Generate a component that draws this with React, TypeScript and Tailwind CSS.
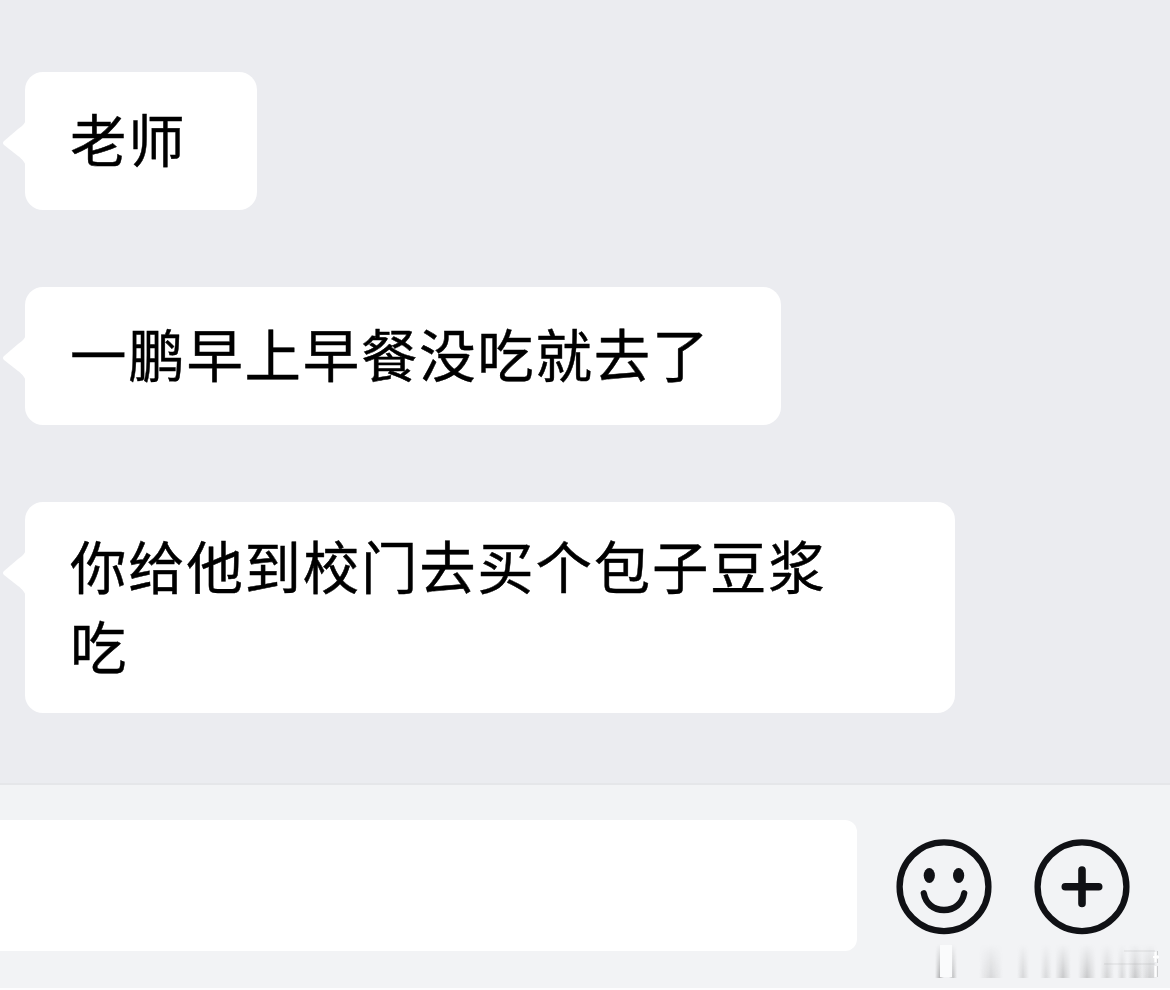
import clsx from "clsx";

interface Message {
  id: number;
  lines: string[];
  className: string;
}

const messages: Message[] = [
  { id: 1, lines: ["老师"], className: "w-[232px] h-[138px] pt-[26px]" },
  { id: 2, lines: ["一鹏早上早餐没吃就去了"], className: "w-[756px] h-[138px] pt-[26px]" },
  { id: 3, lines: ["你给他到校门去买个包子豆浆", "吃"], className: "w-[930px] h-[211px] pt-[23px]" },
];

// vertical streaks in the bottom right corner: x, width, opacity
const streaks = [
  [45, 24, 0.17],
  [83, 12, 0.18],
  [106, 12, 0.16],
  [121, 16, 0.27],
  [144, 18, 0.27],
  [166, 14, 0.2],
  [183, 10, 0.17],
  [194, 14, 0.25],
  [208, 16, 0.15],
];

function MessageBubble({ message }: { message: Message }) {
  return (
    <div
      className={clsx(
        "relative rounded-[18px] bg-white pl-[45px] text-[56.4px] leading-[80px] tracking-[1.8px] text-black [-webkit-text-stroke:0.45px_#000]",
        message.className
      )}
    >
      <svg className="absolute top-[48px] -left-[23px]" width="24" height="46" viewBox="0 0 24 46">
        <path d="M24 0C22 5 20 6 16 9L2 21Q0 23 2 25L16 36C20 39 22 41 24 46Z" fill="#fff" />
      </svg>
      {message.lines.map((line) => (
        <p key={line} className="whitespace-nowrap">
          {line}
        </p>
      ))}
    </div>
  );
}

function SmileIcon() {
  return (
    <svg width="96" height="96" viewBox="0 0 96 96" fill="none" stroke="#101115" strokeWidth="6.3" strokeLinecap="round">
      <circle cx="48" cy="47.7" r="44.4" />
      <ellipse cx="33.3" cy="36.5" rx="5.6" ry="7.5" fill="#101115" stroke="none" />
      <ellipse cx="62.6" cy="36.5" rx="5.6" ry="7.5" fill="#101115" stroke="none" />
      <path d="M27.8 54.3C29.6 64.5 37.5 71 48 71S66.4 64.5 68.2 54.3" />
    </svg>
  );
}

function PlusIcon() {
  return (
    <svg width="96" height="96" viewBox="0 0 96 96" fill="none" stroke="#101115" strokeWidth="6.3" strokeLinecap="round">
      <circle cx="48" cy="47.7" r="44.4" />
      <path d="M48 31V64.5M31.3 47.7H64.7" strokeWidth="7.6" />
    </svg>
  );
}

function CornerStreaks() {
  return (
    <svg className="absolute right-0 bottom-[10px]" width="236" height="34" viewBox="0 0 236 34">
      <defs>
        <linearGradient id="fall" x1="0" y1="0" x2="0" y2="1">
          <stop offset="0" stopColor="#fff" stopOpacity="0" />
          <stop offset="1" stopColor="#fff" />
        </linearGradient>
        <linearGradient id="side" x1="0" y1="0" x2="1" y2="0">
          <stop offset="0" stopColor="#555" stopOpacity="0" />
          <stop offset="0.5" stopColor="#555" />
          <stop offset="1" stopColor="#555" stopOpacity="0" />
        </linearGradient>
        <linearGradient id="edge" x1="0" y1="0" x2="1" y2="0">
          <stop offset="0" stopColor="#555" stopOpacity="0" />
          <stop offset="1" stopColor="#555" />
        </linearGradient>
        <mask id="fade">
          <rect width="236" height="34" fill="url(#fall)" />
        </mask>
      </defs>
      <g mask="url(#fade)">
        <rect x="1" width="9" height="34" fill="url(#side)" opacity="0.4" />
        <rect x="15" width="8" height="34" fill="url(#side)" opacity="0.3" />
        {streaks.map(([x, width, opacity]) => (
          <rect key={x} x={x} width={width} height="34" fill="url(#side)" opacity={opacity} />
        ))}
        <rect x="194" width="26" height="34" fill="url(#edge)" opacity="0.1" />
      </g>
      <rect x="6" y="1" width="12" height="32" fill="#fafbfc" />
      <path d="M190 7H221M170 20H221" stroke="#999" strokeOpacity="0.13" strokeWidth="2" />
      <path d="M221.5 8V18M219 13H225M221.5 22V33" stroke="#fff" strokeWidth="2" />
      <path d="M223.5 7V11M223.5 15V19M223.5 22V33" stroke="#777" strokeOpacity="0.3" />
    </svg>
  );
}

export default function App() {
  return (
    <div className="flex h-[990px] w-[1170px] flex-col overflow-hidden bg-[#fdfdfe] font-['Noto_Sans_CJK_SC',sans-serif]">
      <main className="flex h-[783px] flex-col items-start gap-[77px] bg-[#ebecf0] pt-[72px] pl-[25px]">
        {messages.map((message) => (
          <MessageBubble key={message.id} message={message} />
        ))}
      </main>

      <footer className="relative flex h-[205px] items-start border-t-2 border-[#e5e6e9] bg-[#f2f3f5] pt-[35px]">
        <div className="h-[131px] w-[857px] rounded-r-[12px] bg-white" />
        <button className="mt-[19px] ml-[39px]" aria-label="表情">
          <SmileIcon />
        </button>
        <button className="mt-[19px] ml-[42px]" aria-label="更多">
          <PlusIcon />
        </button>
        <CornerStreaks />
      </footer>
    </div>
  );
}
